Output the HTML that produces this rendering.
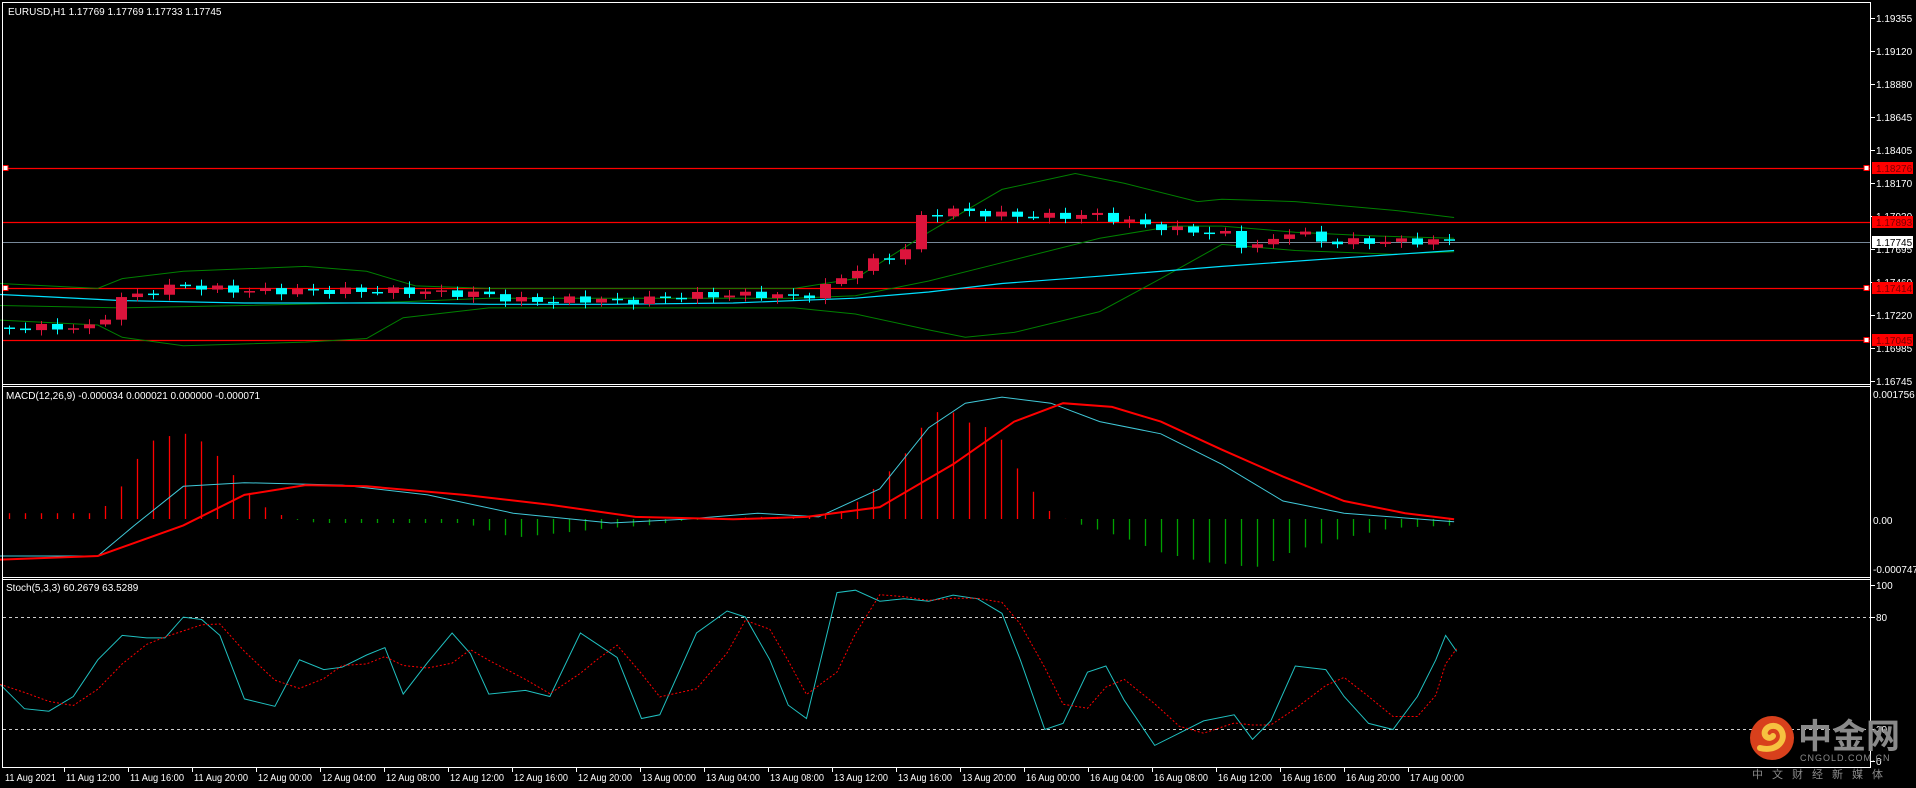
<!DOCTYPE html>
<html><head><meta charset="utf-8">
<style>
html,body{margin:0;padding:0;background:#000;width:1916px;height:788px;overflow:hidden}
svg{display:block}
text{font-family:"Liberation Sans",Arial,sans-serif;font-size:10px;fill:#fff}
</style></head><body>
<svg id="s" width="1916" height="788" xmlns="http://www.w3.org/2000/svg">
<rect width="1916" height="788" fill="#000"/>
<g id="cv"></g>
<g stroke="#fff" stroke-width="1" fill="none" shape-rendering="crispEdges">
<line x1="2" y1="2.5" x2="1870" y2="2.5"/>
<line x1="2.5" y1="2" x2="2.5" y2="767"/>
<line x1="1870.5" y1="2" x2="1870.5" y2="768"/>
<line x1="2" y1="384.5" x2="1870" y2="384.5"/>
<line x1="2" y1="386.5" x2="1870" y2="386.5"/>
<line x1="2" y1="577.5" x2="1870" y2="577.5"/>
<line x1="2" y1="579.5" x2="1870" y2="579.5"/>
<line x1="2" y1="767.5" x2="1870" y2="767.5"/>
</g>
<text x="8" y="15" font-size="11">EURUSD,H1  1.17769 1.17769 1.17733 1.17745</text>
<text x="6" y="399" font-size="9.5">MACD(12,26,9) -0.000034 0.000021 0.000000 -0.000071</text>
<text x="6" y="591" font-size="9.5">Stoch(5,3,3) 60.2679 63.5289</text>
<g id="ax"></g>
<g>
<circle cx="1772" cy="738" r="22" fill="#d8401c"/>
<path d="M1760 748 C1775 752 1786 742 1782 732 C1779 724 1768 724 1765 731 C1763 737 1770 740 1773 736" stroke="#f6c240" stroke-width="6" fill="none" stroke-linecap="round"/>
<text x="1798" y="748" style="font-family:'Noto Sans CJK SC',sans-serif;font-size:34px;font-weight:bold;fill:#8a8a8a">中金网</text>
<text x="1800" y="761" style="font-size:9px;fill:#8a8a8a;letter-spacing:1px">CNGOLD.COM.CN</text>
<text x="1752" y="778" style="font-family:'Noto Sans CJK SC',sans-serif;font-size:11px;fill:#8a8a8a;letter-spacing:9px">中文财经新媒体</text>
</g>
</svg>
<script>
(function(){
var NS="http://www.w3.org/2000/svg";
var cv=document.getElementById("cv"),ax=document.getElementById("ax");
function el(p,t,a,txt){var e=document.createElementNS(NS,t);for(var k in a)e.setAttribute(k,a[k]);if(txt!=null)e.textContent=txt;p.appendChild(e);return e;}
var K=1916/1568;
function interp(pts,x){
  var tx=x/K;
  if(tx<=pts[0][0])return pts[0][1]*K;
  for(var i=1;i<pts.length;i++){if(tx<=pts[i][0]){var a=pts[i-1],b=pts[i];return (a[1]+(b[1]-a[1])*(tx-a[0])/(b[0]-a[0]))*K;}}
  return pts[pts.length-1][1]*K;}
function poly(pts,attrs){var s="";for(var i=0;i<pts.length;i++)s+=(pts[i][0]*K).toFixed(1)+","+(pts[i][1]*K).toFixed(1)+" ";attrs.points=s;attrs.fill="none";return el(cv,"polyline",attrs);}
[168,222,288,340].forEach(function(y){
  el(cv,"line",{x1:3,y1:y+.5,x2:1870,y2:y+.5,stroke:"#f00","stroke-width":1.3});
});
el(cv,"line",{x1:3,y1:242.5,x2:1870,y2:242.5,stroke:"#778899"});
[168,288,340].forEach(function(y){el(cv,"rect",{x:1864,y:y-2.5,width:5,height:5,fill:"#fff",stroke:"#f00"});});
[168,288].forEach(function(y){el(cv,"rect",{x:3,y:y-2.5,width:5,height:5,fill:"#fff",stroke:"#f00"});});
var up=[[0,232],[80,236],[100,228],[150,222],[250,218],[300,222],[340,234],[400,236],[650,236],[700,228],[760,190],[820,155],[880,142],[920,150],[980,165],[1000,163],[1060,165],[1140,172],[1190,178]];
var lo=[[0,262],[80,266],[100,276],[150,283],[250,280],[300,277],[330,260],[400,252],[650,252],[700,257],[760,270],[790,276],[830,272],[900,255],[950,228],[1000,200],[1060,205],[1140,208],[1190,206]];
var mid=[[0,250],[100,252],[200,250],[330,247],[400,244],[650,244],[700,242],[760,230],[820,215],[900,195],[960,185],[1000,185],[1060,190],[1120,193],[1190,195]];
[up,lo,mid].forEach(function(p){poly(p,{stroke:"#008000","stroke-width":1});});
poly([[0,241],[40,243],[100,246],[200,248],[330,248],[400,249],[500,249],[600,248],[700,244],[760,239],[820,232],[900,226],[1000,218],[1100,211],[1190,205]],{stroke:"#00e0ff","stroke-width":1.2});
var cl=[[0,268],[80,268],[95,245],[110,242],[140,235],[150,233],[170,236],[200,238],[260,238],[330,238],[370,240],[400,241],[420,246],[480,245],[520,246],[560,242],[620,241],[650,243],[665,241],[680,232],[695,223],[710,216],[725,210],[740,206],[748,180],[760,176],[775,172],[790,173],[820,176],[860,177],[900,176],[920,181],[945,185],[960,188],[1000,190],[1020,203],[1040,198],[1060,186],[1075,197],[1090,198],[1190,197]];
var prev=interp(cl,9);
for(var i=0;i<91;i++){
  var x=9+16*i, c=interp(cl,x)+Math.sin(i*2.3)*3.5;
  var o=prev; if(Math.abs(o-c)<1)c=o+1;
  var bt=Math.min(o,c),bb=Math.max(o,c);
  var col=c<o?"#dc143c":"#00ffff";
  var wt=bt-2-Math.abs(Math.sin(i*1.7))*4, wb=bb+2+Math.abs(Math.cos(i*1.3))*4;
  el(cv,"line",{x1:x+.5,y1:wt,x2:x+.5,y2:wb,stroke:col});
  el(cv,"rect",{x:x-5,y:bt,width:11,height:Math.max(1.5,bb-bt),fill:col});
  prev=c;
}
var hist=[[0,420],[80,420],[95,405],[120,362],[145,355],[157,355],[175,370],[200,400],[220,418],[240,425],[260,428],[300,428],[380,428],[420,440],[450,437],[500,432],[530,430],[560,426],[620,423],[660,423],[690,418],[710,405],[740,372],[760,340],[775,334],[790,345],[815,352],[830,380],[845,402],[860,420],[880,428],[920,440],[950,452],[985,460],[1010,462],[1025,465],[1040,460],[1060,450],[1100,440],[1140,432],[1190,430]];
var z=519;
for(var i=0;i<91;i++){var x=9+16*i,y=interp(hist,x);
  el(cv,"line",{x1:x+.5,y1:z,x2:x+.5,y2:y,stroke:y<z?"#ff0000":"#00a000","stroke-width":1.3});}
poly([[0,455],[80,455],[110,430],[150,398],[200,395],[280,397],[350,405],[420,420],[500,428],[560,425],[620,420],[670,423],[720,400],[760,350],[790,330],[820,325],[860,330],[900,345],[950,355],[1000,380],[1050,410],[1100,420],[1190,427]],{stroke:"#40c8d8","stroke-width":1});
poly([[0,458],[80,455],[150,430],[200,405],[250,397],[300,398],[380,405],[450,413],[520,423],[600,425],[660,423],[720,415],[780,380],[830,345],[870,330],[910,333],[950,345],[1000,368],[1050,390],[1100,410],[1150,420],[1190,425]],{stroke:"#ff0000","stroke-width":2});
[617,729].forEach(function(y){el(cv,"line",{x1:3,y1:y+.5,x2:1870,y2:y+.5,stroke:"#ccc","stroke-dasharray":"3,3"});});
var st=[[0,560],[20,580],[40,582],[60,570],[80,540],[100,520],[120,522],[135,522],[150,505],[165,507],[180,520],[200,572],[225,578],[245,540],[265,548],[280,546],[300,536],[315,530],[330,568],[350,542],[370,518],[385,535],[400,568],[430,565],[450,570],[475,518],[490,528],[505,538],[525,588],[540,585],[570,518],[595,500],[610,505],[630,540],[645,577],[660,588],[685,485],[700,483],[720,492],[740,490],[760,492],[780,487],[800,490],[820,502],[835,540],[855,597],[870,592],[890,550],[905,545],[920,573],[945,610],[965,600],[985,590],[1010,585],[1025,605],[1040,590],[1060,545],[1085,548],[1100,570],[1120,592],[1140,597],[1160,570],[1175,540],[1183,520],[1192,533]];
poly(st,{stroke:"#20c0c0","stroke-width":1});
var sg=[];for(var i=0;i<st.length;i++){var a=st[Math.max(0,i-2)][1],b=st[Math.max(0,i-1)][1],c=st[i][1];sg.push([st[i][0],(a+b+c)/3]);}
poly(sg,{stroke:"#ff0000","stroke-width":1,"stroke-dasharray":"2,2"});
[["1.19355",18],["1.19120",51],["1.18880",84],["1.18645",117],["1.18405",150],["1.18170",183],["1.17930",216],["1.17695",249],["1.17460",282],["1.17220",315],["1.16985",348],["1.16745",381]].forEach(function(l){
  el(ax,"line",{x1:1871,y1:l[1]+.5,x2:1875,y2:l[1]+.5,stroke:"#fff"});
  el(ax,"text",{x:1876,y:l[1]+4},l[0]);});
[["1.18276",168,"#f00","#700"],["1.17893",222,"#f00","#700"],["1.17414",288,"#f00","#700"],["1.17045",340,"#f00","#700"],["1.17745",242,"#fff","#000"]].forEach(function(l){
  el(ax,"rect",{x:1872,y:l[1]-6,width:41,height:12,fill:l[2]});
  el(ax,"text",{x:1876,y:l[1]+4,style:"fill:"+l[3]},l[0]);});
[["0.001756",394],["0.00",520],["-0.000747",569]].forEach(function(l){el(ax,"text",{x:1873,y:l[1]+4,"font-size":"9.5"},l[0]);});
[["100",585],["80",617],["20",729],["0",761]].forEach(function(l){
  el(ax,"line",{x1:1871,y1:l[1]+.5,x2:1875,y2:l[1]+.5,stroke:"#fff"});
  el(ax,"text",{x:1876,y:l[1]+4},l[0]);});
var tl=["11 Aug 2021","11 Aug 12:00","11 Aug 16:00","11 Aug 20:00","12 Aug 00:00","12 Aug 04:00","12 Aug 08:00","12 Aug 12:00","12 Aug 16:00","12 Aug 20:00","13 Aug 00:00","13 Aug 04:00","13 Aug 08:00","13 Aug 12:00","13 Aug 16:00","13 Aug 20:00","16 Aug 00:00","16 Aug 04:00","16 Aug 08:00","16 Aug 12:00","16 Aug 16:00","16 Aug 20:00","17 Aug 00:00"];
for(var i=0;i<tl.length;i++){var x=i==0?3:67+64*(i-1)-3;
  if(i>0)el(ax,"line",{x1:x+.5,y1:768,x2:x+.5,y2:772,stroke:"#fff"});
  el(ax,"text",{x:x+2,y:781,"font-size":"10",textLength:i==0?51:54,lengthAdjust:"spacingAndGlyphs"},tl[i]);}
})();
</script>
</body></html>
